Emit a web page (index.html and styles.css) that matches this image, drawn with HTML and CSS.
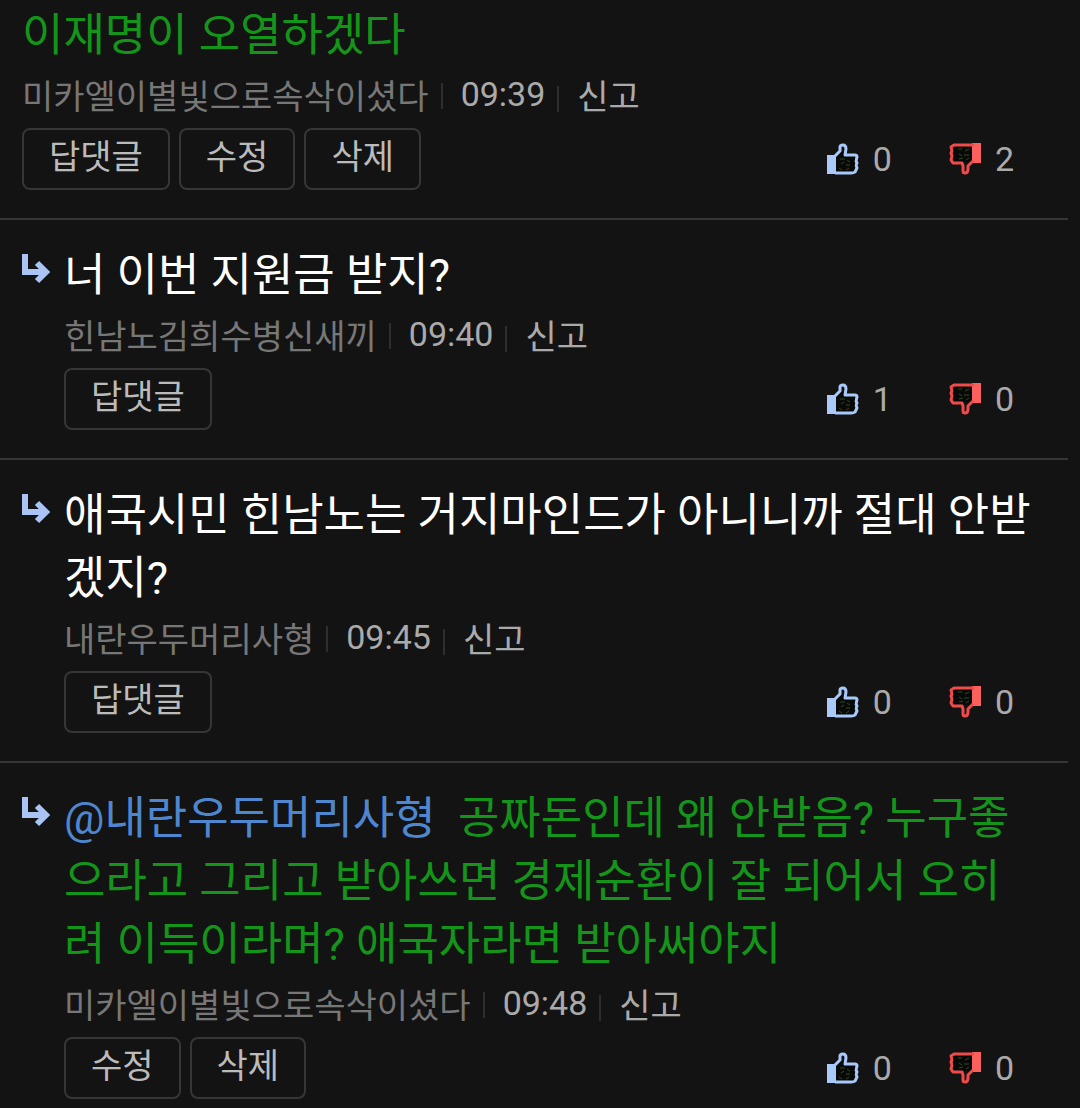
FILE: index.html
```html
<!DOCTYPE html>
<html lang="ko">
<head>
    <meta charset="UTF-8">
    <meta name="viewport" content="width=device-width, initial-scale=1.0">
    <title>댓글</title>
    <link rel="stylesheet" href="styles.css">
</head>
<body>
    <!-- Shared icons -->
    <svg class="icon-defs" aria-hidden="true">
        <symbol id="icon-up" viewBox="0 0 32 32">
            <path fill="#070a08" d="M9 13L14 9H17L18 12H28V29H9z"/>
            <path fill="#a9c9fb" d="M0 12H9V31H0z"/>
            <path fill="none" stroke="#a9c9fb" stroke-width="3" stroke-linejoin="round" d="M8 13L13 8V4Q13 2 16 2Q19 2 19 6L18 12H28Q30 12 30 14L29 18L30 20L29 22L30 25L28 29Q27 30 24 30H8"/>
            <path fill="none" stroke="#070a08" stroke-width="3" d="M23 16H28M24 21H28M23 26H27"/>
            <path fill="none" stroke="#35481f" stroke-width="1" d="M13 16H18M20 17L23 19M14 21L17 19M19 22H23M12 25L15 27M19 27L22 25"/>
        </symbol>
        <symbol id="icon-down" viewBox="0 0 32 32">
            <path fill="#070a08" d="M4 3H24V19H4z"/>
            <path fill="#f9605e" d="M23 0H32V20H23z"/>
            <path fill="none" stroke="#f04b4b" stroke-width="3" stroke-linejoin="round" d="M25 2H5L2 4L3 8L2 10L3 13L2 17L4 20H13L14 23V28Q14 30 16 30Q19 30 19 26V23L24 18"/>
            <path fill="none" stroke="#070a08" stroke-width="3" d="M4 6H9M4 11H8M5 16H9"/>
            <path fill="none" stroke="#35481f" stroke-width="1" d="M9 6H13M16 8L20 6M10 11L13 13M15 12H20M10 16L14 15M17 17L20 15"/>
        </symbol>
        <symbol id="icon-reply" viewBox="0 0 29 30">
            <path fill="none" stroke="#a9c4f5" stroke-width="6" d="M3 0V18H23M15 9L24 18L15 27"/>
        </symbol>
    </svg>

    <main class="comment-list">
        <article class="comment first">
            <div class="comment-body">
                <p class="text mine">이재명이 오열하겠다</p>
                <div class="meta">
                    <span class="name">미카엘이별빛으로속삭이셨다</span>
                    <time class="time">09:39</time>
                    <a class="report" href="#">신고</a>
                </div>
                <div class="actions">
                    <button class="btn" type="button">답댓글</button>
                    <button class="btn" type="button">수정</button>
                    <button class="btn" type="button">삭제</button>
                    <div class="votes">
                        <button class="vote" type="button" aria-label="추천 0"><svg class="vote-icon"><use href="#icon-up"/></svg>0</button>
                        <button class="vote" type="button" aria-label="비추천 2"><svg class="vote-icon"><use href="#icon-down"/></svg>2</button>
                    </div>
                </div>
            </div>
        </article>

        <article class="comment">
            <svg class="reply-icon" aria-hidden="true"><use href="#icon-reply"/></svg>
            <div class="comment-body">
                <p class="text">너 이번 지원금 받지?</p>
                <div class="meta">
                    <span class="name">힌남노김희수병신새끼</span>
                    <time class="time">09:40</time>
                    <a class="report" href="#">신고</a>
                </div>
                <div class="actions">
                    <button class="btn" type="button">답댓글</button>
                    <div class="votes">
                        <button class="vote" type="button" aria-label="추천 1"><svg class="vote-icon"><use href="#icon-up"/></svg>1</button>
                        <button class="vote" type="button" aria-label="비추천 0"><svg class="vote-icon"><use href="#icon-down"/></svg>0</button>
                    </div>
                </div>
            </div>
        </article>

        <article class="comment">
            <svg class="reply-icon" aria-hidden="true"><use href="#icon-reply"/></svg>
            <div class="comment-body">
                <p class="text">애국시민 힌남노는 거지마인드가 아니니까 절대 안받겠지?</p>
                <div class="meta">
                    <span class="name">내란우두머리사형</span>
                    <time class="time">09:45</time>
                    <a class="report" href="#">신고</a>
                </div>
                <div class="actions">
                    <button class="btn" type="button">답댓글</button>
                    <div class="votes">
                        <button class="vote" type="button" aria-label="추천 0"><svg class="vote-icon"><use href="#icon-up"/></svg>0</button>
                        <button class="vote" type="button" aria-label="비추천 0"><svg class="vote-icon"><use href="#icon-down"/></svg>0</button>
                    </div>
                </div>
            </div>
        </article>

        <article class="comment">
            <svg class="reply-icon" aria-hidden="true"><use href="#icon-reply"/></svg>
            <div class="comment-body">
                <p class="text mine"><a class="mention" href="#">@내란우두머리사형</a>&nbsp; 공짜돈인데 왜 안받음? 누구좋으라고 그리고 받아쓰면 경제순환이 잘 되어서 오히려 이득이라며? 애국자라면 받아써야지</p>
                <div class="meta">
                    <span class="name">미카엘이별빛으로속삭이셨다</span>
                    <time class="time">09:48</time>
                    <a class="report" href="#">신고</a>
                </div>
                <div class="actions">
                    <button class="btn" type="button">수정</button>
                    <button class="btn" type="button">삭제</button>
                    <div class="votes">
                        <button class="vote" type="button" aria-label="추천 0"><svg class="vote-icon"><use href="#icon-up"/></svg>0</button>
                        <button class="vote" type="button" aria-label="비추천 0"><svg class="vote-icon"><use href="#icon-down"/></svg>0</button>
                    </div>
                </div>
            </div>
        </article>
    </main>
</body>
</html>
```

FILE: styles.css
```css
* {
    box-sizing: border-box;
}
body {
    margin: 0;
    background-color: #131313;
    color: #fff;
    font-family: Roboto, "Noto Sans CJK KR", sans-serif;
    font-size: 34px;
}
a {
    color: inherit;
    text-decoration: none;
}
button {
    font: inherit;
    background: none;
    cursor: pointer;
}
.icon-defs {
    display: none;
}
.comment-list {
    margin-right: 12px;
}
.comment {
    display: flex;
    gap: 13px;
    padding: 24px 34px 28px 22px;
    border-bottom: 2px solid #363636;
}
.comment.first {
    padding-top: 4px;
}
.comment:last-child {
    border-bottom: none;
    padding-bottom: 10px;
}
.reply-icon {
    flex: none;
    width: 29px;
    height: 30px;
    margin-top: 10px;
}
.comment-body {
    flex: 1;
    min-width: 0;
}
.text {
    margin: 0;
    font-size: 45px;
    line-height: 63px;
}
.mine {
    color: #13951a;
}
.mention {
    color: #4e87cf;
}
.meta {
    display: flex;
    align-items: center;
    height: 54px;
    margin-bottom: 7px;
    color: #aaa;
}
.name {
    color: #777;
}
/* divider before time and report link */
.time::before,
.report::before {
    content: "";
    display: inline-block;
    width: 2px;
    height: 26px;
    margin: 0 18px 0 12px;
    background-color: #2e2e2e;
    vertical-align: -3px;
}
.actions {
    display: flex;
    align-items: center;
    gap: 9px;
}
.btn {
    height: 62px;
    padding: 0 25px 4px;
    border: 2px solid #363636;
    border-radius: 8px;
    color: #bbb;
    line-height: 54px;
}
.votes {
    display: flex;
    gap: 57px;
    margin-left: auto;
    padding-right: 20px;
}
.vote {
    display: flex;
    align-items: center;
    gap: 14px;
    padding: 0;
    border: none;
    color: #aaa;
}
.vote-icon {
    width: 32px;
    height: 32px;
}
```
